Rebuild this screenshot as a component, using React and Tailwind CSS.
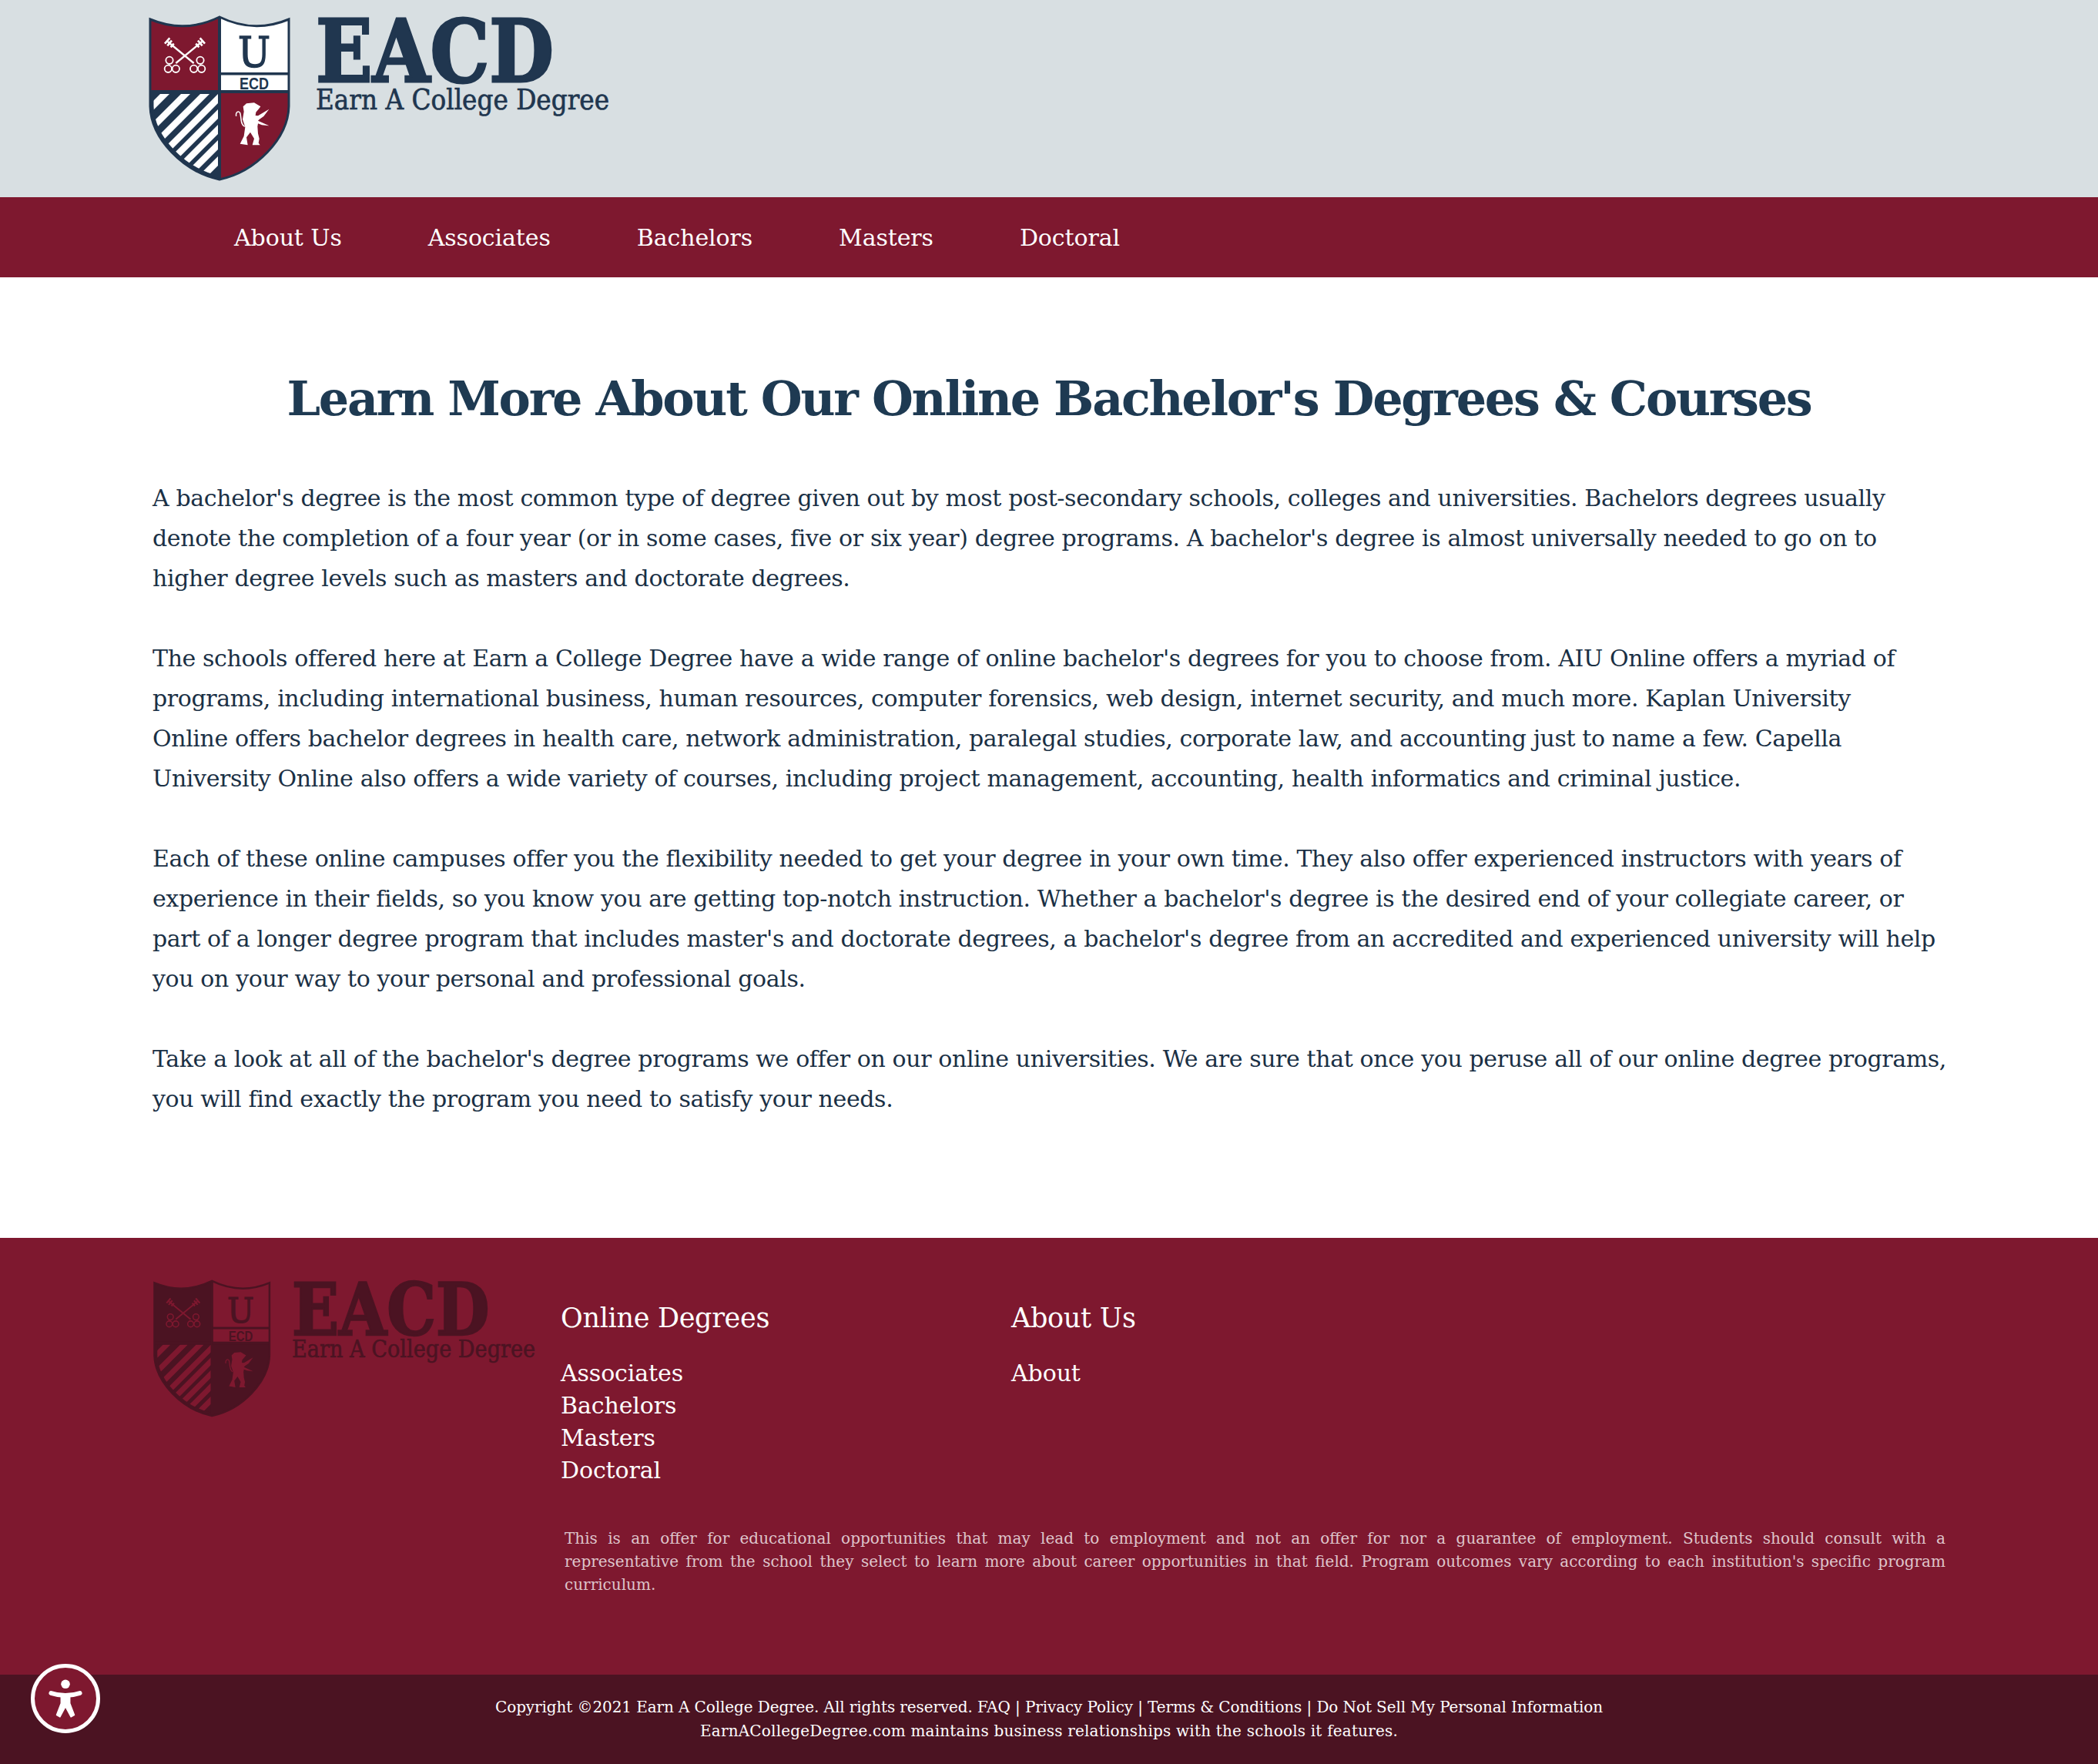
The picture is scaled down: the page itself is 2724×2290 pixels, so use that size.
function Key({ mirror, color }) {
  return (
    <g transform={mirror ? 'translate(210 0) scale(-1 1)' : undefined} stroke={color} fill="none">
      <path d="M38 42 L140 126" strokeWidth="7" />
      <path d="M27 50 L46 28 M37 58 L54 38 M50 64 L62 50" strokeWidth="8" />
      <circle cx="165" cy="115" r="14" strokeWidth="5.5" />
      <circle cx="170" cy="148" r="14" strokeWidth="5.5" />
      <circle cx="140" cy="148" r="14" strokeWidth="5.5" />
    </g>
  )
}

const stripeStarts = [21, 48, 73, 96, 116, 136, 156, 177]

function Logo({ className, navy, maroon, white, id }) {
  const shield = 'M3 5 Q48 24 93 2 Q138 24 183 5 L183 118 C182 160 140 203 93 213 C46 203 4 160 3 118 Z'
  return (
    <svg viewBox="0 0 600 220" className={className}>
      <defs>
        <clipPath id={id}><path d={shield} /></clipPath>
      </defs>
      <g clipPath={`url(#${id})`}>
        <rect x="0" y="99" width="93" height="120" fill={navy} />
        {stripeStarts.map(s => (
          <path key={s} d={`M${s + 4} 99 L${s - 126} 229`} stroke={white} strokeWidth="8.5" />
        ))}
        <path d={shield} fill="none" stroke={navy} strokeWidth="9" />
        <rect x="0" y="0" width="93" height="99" fill={maroon} />
        <rect x="93" y="0" width="95" height="99" fill={white} />
        <rect x="93" y="99" width="95" height="120" fill={maroon} />
        <rect x="0" y="97" width="95" height="5" fill={navy} />
        <rect x="91" y="0" width="4" height="219" fill={navy} />
        <rect x="93" y="74" width="95" height="3.5" fill={navy} />
        <rect x="93" y="97" width="95" height="4" fill={navy} />
      </g>
      <path d={shield} fill="none" stroke={navy} strokeWidth="3" />
      <g transform="translate(13 20) scale(.3333)">
        <Key color={white} />
        <Key mirror color={white} />
      </g>
      <g transform="translate(103 105) scale(.3333)">
        <path
          fill={white}
          d="M75 28 L105 25 L130 40 L122 50 L112 62 L110 75 L120 76 L163 50 L142 78 L125 90 L120 95 L163 115 L135 112 L120 106 L118 118 L120 145 L125 165 L122 182 L128 190 L98 190 L105 165 L90 140 L75 160 L80 190 L50 185 L65 155 L70 120 L60 90 L65 60 L62 40 Z"
        />
        <path
          d="M68 118 C50 110 56 80 50 65 C45 55 32 60 35 78"
          fill="none"
          stroke={white}
          strokeWidth="4.5"
        />
      </g>
      <text x="138" y="67" textAnchor="middle" fontSize="55" fontFamily="'DejaVu Serif', serif" fill={navy} stroke={navy} strokeWidth="1.5" textLength="42" lengthAdjust="spacingAndGlyphs">U</text>
      <text x="138" y="96" textAnchor="middle" fontSize="22" fontWeight="700" fontFamily="'Liberation Sans', sans-serif" fill={navy} textLength="38" lengthAdjust="spacingAndGlyphs">ECD</text>
      <text x="218" y="86" fontSize="112" fontWeight="700" fontFamily="'DejaVu Serif', serif" fill={navy} stroke={navy} strokeWidth="3" textLength="309" lengthAdjust="spacingAndGlyphs">EACD</text>
      <text x="218" y="122" fontSize="37" fontFamily="'DejaVu Serif', serif" fill={navy} stroke={navy} strokeWidth="0.7" textLength="381" lengthAdjust="spacingAndGlyphs">Earn A College Degree</text>
    </svg>
  )
}

const navLinks = ['About Us', 'Associates', 'Bachelors', 'Masters', 'Doctoral']

const paragraphs = [
  [
    "A bachelor's degree is the most common type of degree given out by most post-secondary schools, colleges and universities. Bachelors degrees usually",
    "denote the completion of a four year (or in some cases, five or six year) degree programs. A bachelor's degree is almost universally needed to go on to",
    'higher degree levels such as masters and doctorate degrees.',
  ],
  [
    "The schools offered here at Earn a College Degree have a wide range of online bachelor's degrees for you to choose from. AIU Online offers a myriad of",
    'programs, including international business, human resources, computer forensics, web design, internet security, and much more. Kaplan University',
    'Online offers bachelor degrees in health care, network administration, paralegal studies, corporate law, and accounting just to name a few. Capella',
    'University Online also offers a wide variety of courses, including project management, accounting, health informatics and criminal justice.',
  ],
  [
    'Each of these online campuses offer you the flexibility needed to get your degree in your own time. They also offer experienced instructors with years of',
    "experience in their fields, so you know you are getting top-notch instruction. Whether a bachelor's degree is the desired end of your collegiate career, or",
    "part of a longer degree program that includes master's and doctorate degrees, a bachelor's degree from an accredited and experienced university will help",
    'you on your way to your personal and professional goals.',
  ],
  [
    "Take a look at all of the bachelor's degree programs we offer on our online universities. We are sure that once you peruse all of our online degree programs,",
    'you will find exactly the program you need to satisfy your needs.',
  ],
]

export default function App() {
  return (
    <div className="relative h-[2290px] font-['DejaVu_Serif',serif] text-white overflow-hidden">
      <header className="h-[256px] bg-[#d8dfe2] pl-[192px] pt-[20px]">
        <Logo id="top-logo" className="w-[600px] h-[220px]" navy="#20364f" maroon="#7e182f" white="#ffffff" />
      </header>

      <nav className="h-[104px] bg-[#7e182f] flex items-center pl-[248px]">
        {navLinks.map(link => (
          <a key={link} className="px-[56px] text-[30px] tracking-[-0.1px]">{link}</a>
        ))}
      </nav>

      <main className="h-[1247px] bg-white px-[198px] pt-[119px] text-[#1a3045]">
        <h1 className="text-center text-[62px] leading-[78px] font-bold tracking-[-2.3px] text-[#1e3a52] mb-[64px]">
          Learn More About Our Online Bachelor's Degrees &amp; Courses
        </h1>
        <div className="flex flex-col gap-[52px] text-[30px] leading-[52px] tracking-[-0.38px] whitespace-nowrap">
          {paragraphs.map((lines, i) => (
            <p key={i}>
              {lines.map((l, j) => <span key={j} className="block">{l}</span>)}
            </p>
          ))}
        </div>
      </main>

      <footer className="h-[567px] bg-[#7e182f] pl-[198px] pr-[198px] flex">
        <div className="w-[530px] pt-[54px] shrink-0">
          <Logo id="foot-logo" className="w-[498px] h-[183px]" navy="#4b1322" maroon="#4b1322" white="#7e182f" />
        </div>
        <div className="flex-1 pt-[80px]">
          <div className="flex">
            <div className="w-[585px]">
              <h3 className="text-[35px] leading-[48px] mb-[27px] tracking-[-0.3px]">Online Degrees</h3>
              <ul className="text-[30px] leading-[42px] tracking-[-0.1px]">
                <li>Associates</li>
                <li>Bachelors</li>
                <li>Masters</li>
                <li>Doctoral</li>
              </ul>
            </div>
            <div>
              <h3 className="text-[35px] leading-[48px] mb-[27px] tracking-[-0.3px]">About Us</h3>
              <ul className="text-[30px] leading-[42px] tracking-[-0.1px]">
                <li>About</li>
              </ul>
            </div>
          </div>
          <p className="mt-[52px] pl-[5px] text-[20px] leading-[30px] text-white/75">
            <span className="block [text-align-last:justify]">This is an offer for educational opportunities that may lead to employment and not an offer for nor a guarantee of employment. Students should consult with a</span>
            <span className="block [text-align-last:justify]">representative from the school they select to learn more about career opportunities in that field. Program outcomes vary according to each institution's specific program</span>
            <span className="block">curriculum.</span>
          </p>
        </div>
      </footer>

      <div className="h-[116px] bg-[#4b1322] pt-[27px] text-center text-[20px] leading-[31px] tracking-[-0.1px]">
        <p>Copyright ©2021 Earn A College Degree. All rights reserved. FAQ | Privacy Policy | Terms &amp; Conditions | Do Not Sell My Personal Information</p>
        <p className="tracking-[0.2px]">EarnACollegeDegree.com maintains business relationships with the schools it features.</p>
      </div>

      <button className="absolute left-[40px] top-[2160px] w-[90px] h-[90px] rounded-full bg-[#7e182f] border-[5px] border-white flex items-center justify-center">
        <svg viewBox="0 0 90 90" className="w-[80px] h-[80px]">
          <circle cx="45" cy="24" r="6.5" fill="white" />
          <path d="M24 37 Q45 44 66 37" stroke="white" strokeWidth="6.5" strokeLinecap="round" fill="none" />
          <path d="M38.5 40 L51.5 40 L51.5 52 L58 69 L53 72 L45 57 L37 72 L32 69 L38.5 52 Z" fill="white" stroke="white" strokeWidth="1.5" strokeLinejoin="round" />
        </svg>
      </button>
    </div>
  )
}
